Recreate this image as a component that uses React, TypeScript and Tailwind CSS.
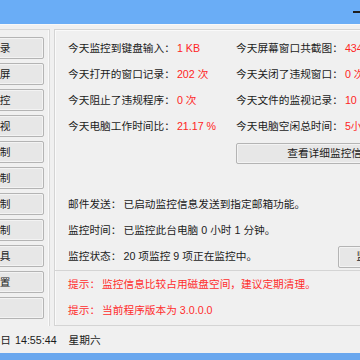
import React from 'react';

const navItems = [
  '键盘记录',
  '屏幕截屏',
  '程序监控',
  '文件监视',
  '网页限制',
  '聊天限制',
  '游戏限制',
  '端口限制',
  '系统工具',
  '参数设置',
];

const leftStats = [
  ['今天监控到键盘输入：', '1 KB'],
  ['今天打开的窗口记录：', '202 次'],
  ['今天阻止了违规程序：', '0 次'],
  ['今天电脑工作时间比：', '21.17 %'],
];

const rightStats = [
  ['今天屏幕窗口共截图：', '434 张'],
  ['今天关闭了违规窗口：', '0 次'],
  ['今天文件的监视记录：', '10 条'],
  ['今天电脑空闲总时间：', '5小时'],
];

const btn =
  'border border-[#b4b4b4] rounded-[2px] bg-[#e7e7e7] shadow-[inset_0_0_0_1px_#f3f3f3] flex items-center justify-center whitespace-nowrap';

function StatRow({ label, value }: { label: string; value: string }) {
  return (
    <div className="h-[26px] flex items-center whitespace-nowrap">
      <span>{label}</span>
      <span className="ml-[2px] text-[#ff2424]">{value}</span>
    </div>
  );
}

export default function App() {
  return (
    <div className="w-[360px] h-[360px] overflow-hidden bg-[#f0f0f0] flex flex-col text-[10.7px] leading-none text-[#1b1b1b] font-['Liberation_Sans','Noto_Sans_CJK_SC',sans-serif]">
      {/* 标题栏 */}
      <div className="h-[24px] shrink-0 bg-[#6aadf6] flex items-center justify-end">
        <div className="w-[8px] h-[2px] bg-[#1e1e1e] mr-[-1px]" />
      </div>
      <div className="h-[1px] shrink-0 bg-[#f8f8f8]" />

      {/* 主体 */}
      <div className="flex shrink-0 pt-[4px] h-[301px]">
        {/* 左侧菜单 */}
        <div className="ml-[-60px] w-[110px] shrink-0 border-t border-r border-[#d8d8d8] shadow-[inset_-1px_0_0_#fafafa] pt-[7px]">
          <div className="flex flex-col gap-[4px]">
            {navItems.map((item) => (
              <div key={item} className={`${btn} w-[104px] h-[22px] pr-[6px]`}>
                {item}
              </div>
            ))}
            <div className={`${btn} w-[104px] h-[22px] pr-[35px] text-[#3a8de6]`}>正版注册</div>
          </div>
        </div>

        {/* 右侧信息 */}
        <div className="ml-[4px] w-[420px] shrink-0 border-t border-l border-b border-[#d4d4d4] shadow-[inset_1px_1px_0_#fafafa] flex flex-col">
          <div className="pl-[13px] pt-[5px]">
            <div className="grid grid-cols-[168px_168px]">
              <div>
                {leftStats.map(([l, v]) => (
                  <StatRow key={l} label={l} value={v} />
                ))}
              </div>
              <div>
                {rightStats.map(([l, v]) => (
                  <StatRow key={l} label={l} value={v} />
                ))}
              </div>
            </div>
            <div className={`${btn} ml-[168px] mt-[4px] w-[188px] h-[21px]`}>查看详细监控信息</div>

            <div className="mt-[27px]">
              <div className="h-[26px] flex items-center whitespace-nowrap">
                <span>邮件发送：</span>
                <span className="ml-[2px]">已启动监控信息发送到指定邮箱功能。</span>
              </div>
              <div className="h-[26px] flex items-center whitespace-nowrap">
                <span>监控时间：</span>
                <span className="ml-[2px]">已监控此台电脑 0 小时 1 分钟。</span>
              </div>
              <div className="h-[26px] flex items-center whitespace-nowrap">
                <div className="w-[270px] flex items-center">
                  <span>监控状态：</span>
                  <span className="ml-[2px]">20 项监控 9 项正在监控中。</span>
                </div>
                <div className={`${btn} w-[80px] h-[22px] mt-[1px]`}>监控设置</div>
              </div>
            </div>
          </div>

          <div className="mt-[1px] border-t border-[#d4d4d4] shadow-[inset_0_1px_0_#fafafa]" />

          <div className="pl-[13px] text-[#ff2d2d]">
            <div className="h-[26px] flex items-center whitespace-nowrap">
              <span>提示：</span>
              <span className="ml-[2px]">监控信息比较占用磁盘空间，建议定期清理。</span>
            </div>
            <div className="h-[26px] flex items-center whitespace-nowrap">
              <span>提示：</span>
              <span className="ml-[2px]">当前程序版本为 3.0.0.0</span>
            </div>
          </div>
        </div>
      </div>

      {/* 状态栏 */}
      <div className="h-[27px] shrink-0 pt-[2px] flex items-center whitespace-nowrap">
        <div className="w-[11px] shrink-0 flex justify-end">2015年1月3日</div>
        <span className="ml-[4px]">14:55:44</span>
        <span className="ml-[12px]">星期六</span>
      </div>
      <div className="flex-1 bg-[#69a7ee]" />
    </div>
  );
}
